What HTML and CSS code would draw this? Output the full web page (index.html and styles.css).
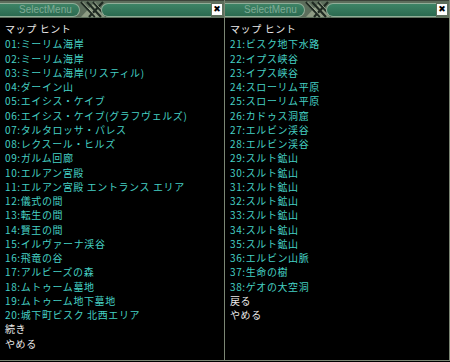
FILE: index.html
```html
<!DOCTYPE html>
<html lang="ja">
<head>
    <meta charset="UTF-8">
    <title>SelectMenu</title>
    <link rel="stylesheet" href="styles.css">
</head>
<body>
    <div class="window">
        <div class="titlebar">
            <div class="pill pill-left"><span class="title">SelectMenu</span></div>
            <svg class="ornament" width="26" height="17" viewBox="0 0 26 17">
                <polygon points="1,16 13,3 25,16" fill="#8e9c84"/>
                <path d="M1 1 L15 16 M7 1 L21 16 M13 1 L27 16" stroke="#1f2a22" stroke-width="2.2"/>
                <path d="M23 1 L9 16" stroke="#1f2a22" stroke-width="2.2"/>
                <path d="M2.5 1 L16.5 16 M14.5 1 L28 16" stroke="#b0bca4" stroke-width="0.8"/>
            </svg>
            <div class="pill pill-right"></div>
            <div class="close">&#x2716;</div>
        </div>
        <ul class="menu">
            <li class="head">マップ ヒント</li>
            <li>01:ミーリム海岸</li>
            <li>02:ミーリム海岸</li>
            <li>03:ミーリム海岸(リスティル)</li>
            <li>04:ダーイン山</li>
            <li>05:エイシス・ケイブ</li>
            <li>06:エイシス・ケイブ(グラフヴェルズ)</li>
            <li>07:タルタロッサ・パレス</li>
            <li>08:レクスール・ヒルズ</li>
            <li>09:ガルム回廊</li>
            <li>10:エルアン宮殿</li>
            <li>11:エルアン宮殿 エントランス エリア</li>
            <li>12:儀式の間</li>
            <li>13:転生の間</li>
            <li>14:賢王の間</li>
            <li>15:イルヴァーナ渓谷</li>
            <li>16:飛竜の谷</li>
            <li>17:アルビーズの森</li>
            <li>18:ムトゥーム墓地</li>
            <li>19:ムトゥーム地下墓地</li>
            <li>20:城下町ビスク 北西エリア</li>
            <li class="cmd">続き</li>
            <li class="cmd">やめる</li>
        </ul>
    </div>
    <div class="window">
        <div class="titlebar">
            <div class="pill pill-left"><span class="title">SelectMenu</span></div>
            <svg class="ornament" width="26" height="17" viewBox="0 0 26 17">
                <polygon points="1,16 13,3 25,16" fill="#8e9c84"/>
                <path d="M1 1 L15 16 M7 1 L21 16 M13 1 L27 16" stroke="#1f2a22" stroke-width="2.2"/>
                <path d="M23 1 L9 16" stroke="#1f2a22" stroke-width="2.2"/>
                <path d="M2.5 1 L16.5 16 M14.5 1 L28 16" stroke="#b0bca4" stroke-width="0.8"/>
            </svg>
            <div class="pill pill-right"></div>
            <div class="close">&#x2716;</div>
        </div>
        <ul class="menu">
            <li class="head">マップ ヒント</li>
            <li>21:ビスク地下水路</li>
            <li>22:イプス峡谷</li>
            <li>23:イプス峡谷</li>
            <li>24:スローリム平原</li>
            <li>25:スローリム平原</li>
            <li>26:カドゥス洞窟</li>
            <li>27:エルビン渓谷</li>
            <li>28:エルビン渓谷</li>
            <li>29:スルト鉱山</li>
            <li>30:スルト鉱山</li>
            <li>31:スルト鉱山</li>
            <li>32:スルト鉱山</li>
            <li>33:スルト鉱山</li>
            <li>34:スルト鉱山</li>
            <li>35:スルト鉱山</li>
            <li>36:エルビン山脈</li>
            <li>37:生命の樹</li>
            <li>38:ゲオの大空洞</li>
            <li class="cmd">戻る</li>
            <li class="cmd">やめる</li>
        </ul>
    </div>
</body>
</html>
```

FILE: styles.css
```css
body {
    margin: 0;
    background-color: #000;
    display: flex;
    width: 450px;
    height: 362px;
    overflow: hidden;
    font-family: "Noto Sans CJK JP", sans-serif;
}
.window {
    width: 224px;
    height: 360px;
    border-right: 1px solid #7b8674;
    border-bottom: 1px solid #7b8674;
    display: flex;
    flex-direction: column;
}
.titlebar {
    height: 18px;
    background-color: #5d6e5c;
    border-top: 1px solid #3c443a;
    box-sizing: border-box;
    display: flex;
    align-items: center;
}
.pill {
    height: 14px;
    background: linear-gradient(#3d8466, #2b6a50);
    border: 1px solid #8fae98;
    box-sizing: border-box;
}
.pill-left {
    flex: none;
    width: 80px;
    border-left: none;
    border-radius: 0 7px 7px 0;
    display: flex;
    align-items: center;
    padding-left: 19px;
    overflow: hidden;
}
.pill-right {
    flex: 1;
    margin-left: -5px;
    border-right: none;
    border-radius: 7px 0 0 7px;
}
.ornament { flex: none; }
.title {
    font-family: "Liberation Sans", sans-serif;
    font-size: 10px;
    color: #7fac96;
    line-height: 12px;
    white-space: nowrap;
}
.close {
    flex: none;
    width: 10px;
    height: 11px;
    margin: 0 2px 0 1px;
    background-color: #fff;
    color: #000;
    font-family: "DejaVu Sans", sans-serif;
    font-size: 9px;
    line-height: 11px;
    text-align: center;
    font-weight: bold;
}
.menu {
    list-style: none;
    margin: 0;
    padding: 4px 0 0 5px;
    font-size: 10px;
    letter-spacing: 0.6px;
    line-height: 14.25px;
    color: #45d0c4;
}
.menu li { white-space: nowrap; }
.menu .head { color: #eaeaea; margin-bottom: 1px; }
.menu .cmd { color: #eaeaea; }
```
